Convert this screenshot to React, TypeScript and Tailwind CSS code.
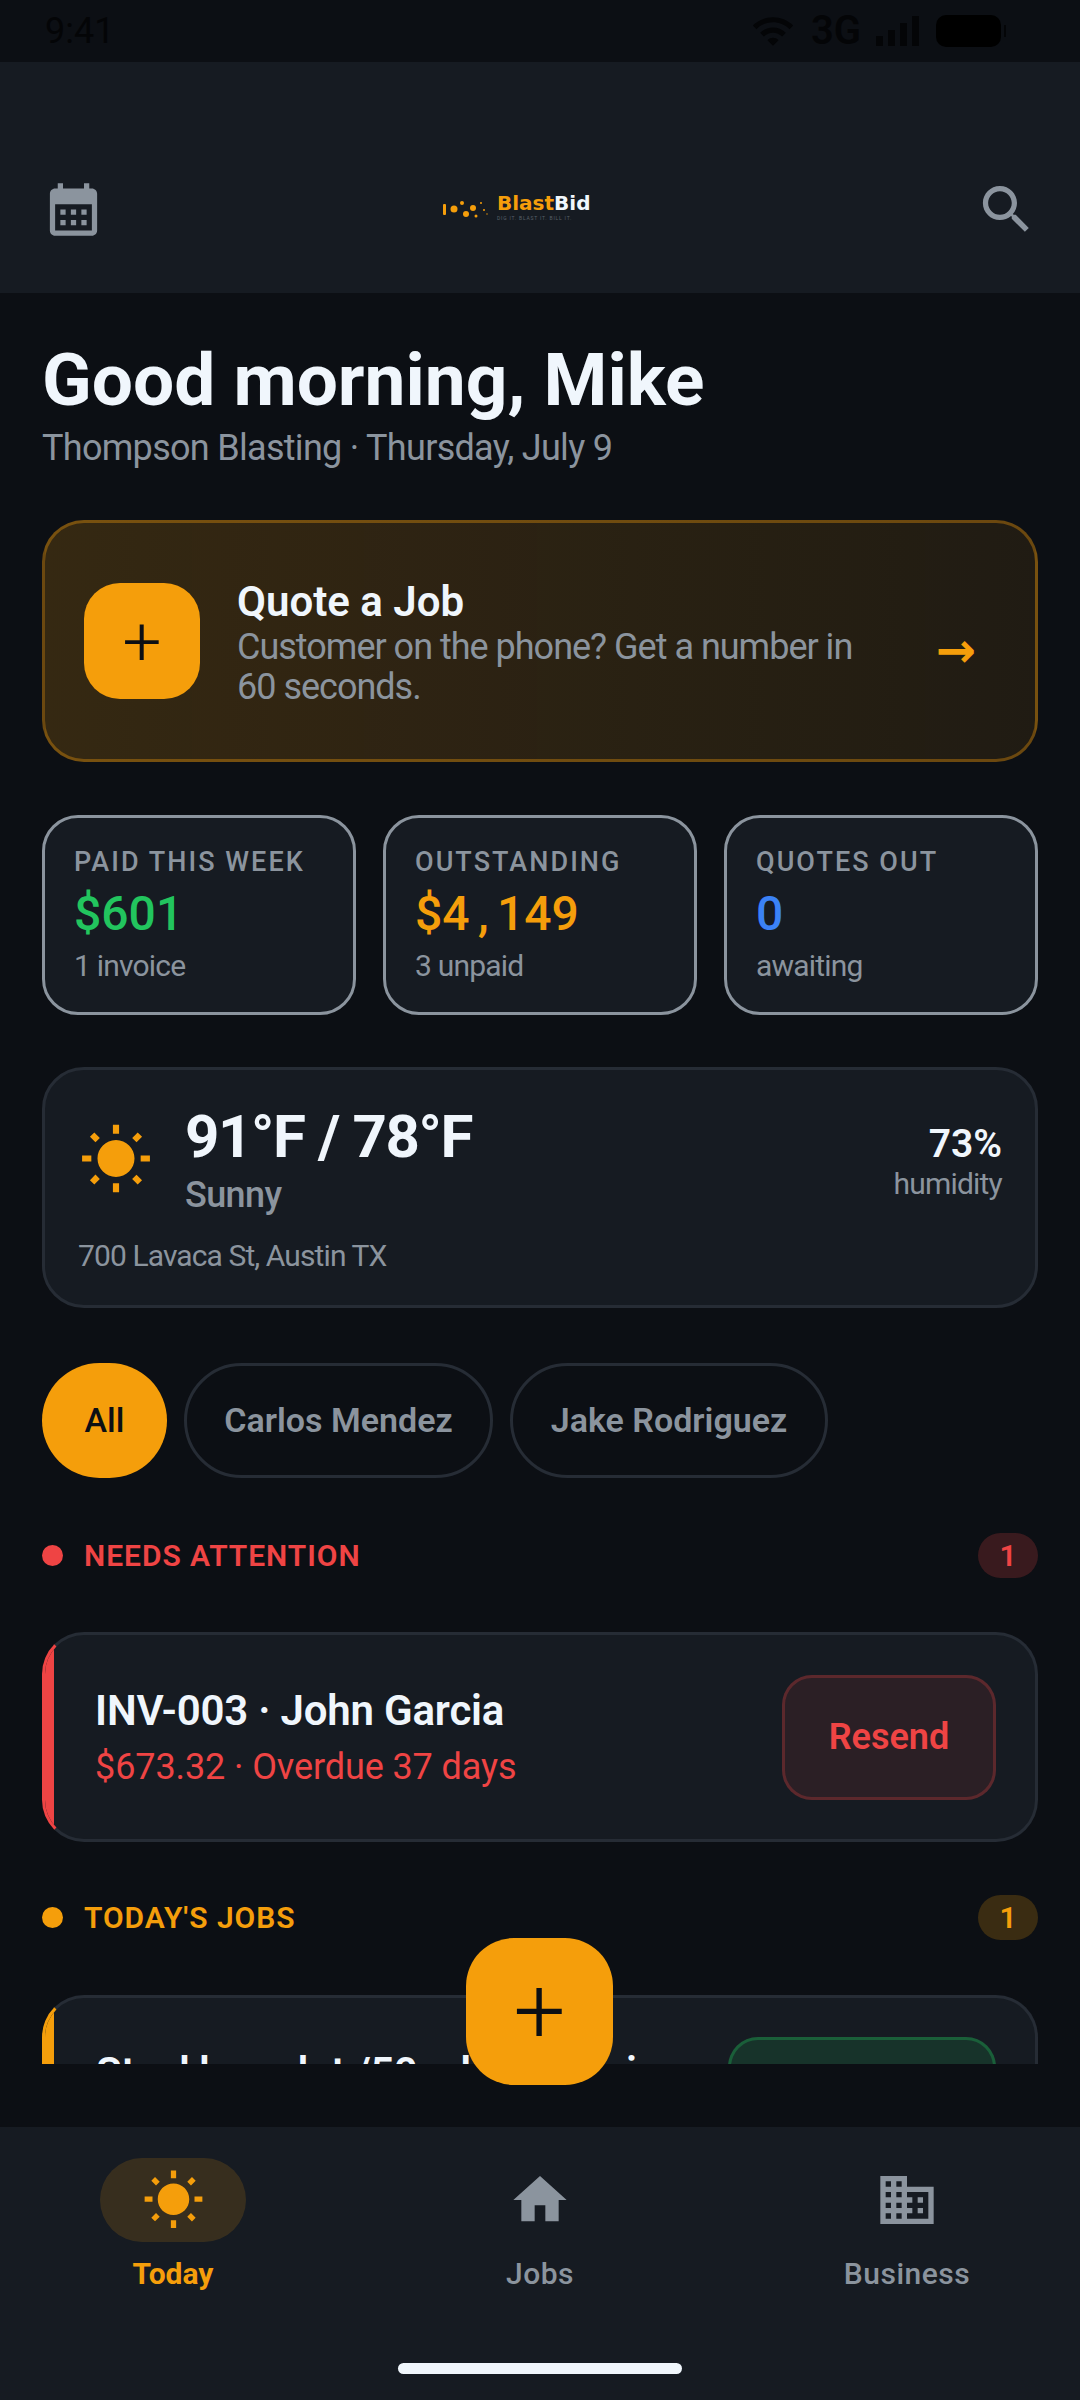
const sans = "font-['Roboto',sans-serif]";

const stats = [
  { label: "PAID THIS WEEK", value: "$601", sub: "1 invoice", color: "text-[#22c55e]" },
  { label: "OUTSTANDING", value: "$4,149", sub: "3 unpaid", color: "text-[#f59e0b]" },
  { label: "QUOTES OUT", value: "0", sub: "awaiting", color: "text-[#3b82f6]" },
];

function Sun({ size }: { size: string }) {
  return (
    <svg viewBox="0 0 24 24" className={`${size} fill-[#f59e0b]`}>
      <path d="M6.76 4.84l-1.8-1.79-1.41 1.41 1.79 1.79 1.42-1.41zM4 10.5H1v2h3v-2zm9-9.95h-2V3.5h2V.55zm7.45 3.91l-1.41-1.41-1.79 1.79 1.41 1.41 1.79-1.79zm-3.21 13.7l1.79 1.8 1.41-1.41-1.8-1.79-1.4 1.4zM20 10.5v2h3v-2h-3zm-8-5c-3.31 0-6 2.69-6 6s2.69 6 6 6 6-2.69 6-6-2.69-6-6-6zm-1 16.95h2V19.5h-2v2.95zm-7.45-3.91l1.41 1.41 1.79-1.8-1.41-1.41-1.79 1.8z" />
    </svg>
  );
}

function StatusBar() {
  return (
    <div className="h-[62px] bg-[#0c0f14] flex items-center pl-[45px] pr-[74px] text-[#040507]">
      <span className="text-[36px] leading-none">9:41</span>
      <div className="ml-auto flex items-center">
        <svg viewBox="0 0 24 24" className="w-[44px] h-[44px] fill-[#040507]">
          <path d="M1 9l2 2c5-5 13-5 18 0l2-2C17 3 7 3 1 9zm4 4l2 2c2.8-2.800 7.200-2.800 10 0l2-2c-3.900-3.900-10.100-3.900-14 0zm4 4l3 3 3-3c-1.700-1.700-4.300-1.700-6 0z" />
        </svg>
        <span className="ml-[16px] text-[40px] leading-none font-semibold">3G</span>
        <div className="ml-[15px] flex items-end gap-[5px] h-[30px]">
          <div className="w-[7px] h-[10px] bg-[#040507]" />
          <div className="w-[7px] h-[16px] bg-[#040507]" />
          <div className="w-[7px] h-[23px] bg-[#040507]" />
          <div className="w-[7px] h-[30px] bg-[#040507]" />
        </div>
        <div className="ml-[17px] w-[65px] h-[32px] rounded-[10px] bg-[#000000]" />
        <div className="ml-[3px] w-[2px] h-[12px] bg-[#040507]" />
      </div>
    </div>
  );
}

function Logo() {
  return (
    <div className="w-[194px] mt-[15px] flex items-start">
      <svg viewBox="0 0 47 20" className="w-[47px] h-[20px] fill-[#f59e0b] mt-[6px]">
        <rect x="0" y="5" width="3" height="11" rx="1" />
        <circle cx="11" cy="10" r="3.500" />
        <circle cx="19" cy="4" r="2" />
        <circle cx="23" cy="15" r="3" />
        <circle cx="30" cy="9" r="3" />
        <circle cx="33" cy="17" r="1.500" />
        <circle cx="38" cy="4" r="1" />
        <circle cx="41" cy="11" r="1" />
        <circle cx="44" cy="15" r="0.700" />
      </svg>
      <div className="ml-[7px] flex flex-col">
        <span className="font-['DejaVu_Sans',sans-serif] text-[20px] leading-[20px] font-bold text-[#f59e0b]">
          Blast<span className="text-[#f0f6fc]">Bid</span>
        </span>
        <span className="mt-[1px] text-[5px] leading-[8px] tracking-[0.8px] text-[#586069] whitespace-nowrap">
          DIG IT. BLAST IT. BILL IT.
        </span>
      </div>
    </div>
  );
}

function Header() {
  return (
    <div className="h-[231px] bg-[#161b22] pt-[116px] px-[42px] flex items-start">
      <svg viewBox="0 0 24 24" className="w-[63px] h-[63px] fill-[#8b949e]">
        <path d="M19 4h-1V2h-2v2H8V2H6v2H5C3.890 4 3.010 4.900 3.010 6L3 20c0 1.100.890 2 2 2h14c1.100 0 2-.900 2-2V6c0-1.100-.900-2-2-2zm0 16H5V10h14v10zM9 14H7v-2h2v2zm4 0h-2v-2h2v2zm4 0h-2v-2h2v2zM9 18H7v-2h2v2zm4 0h-2v-2h2v2zm4 0h-2v-2h2v2z" />
      </svg>
      <div className="flex-1 flex justify-center">
        <Logo />
      </div>
      <svg viewBox="0 0 24 24" className="w-[63px] h-[63px] fill-[#8b949e]">
        <path d="M15.500 14h-.790l-.280-.270C15.410 12.590 16 11.110 16 9.500 16 5.910 13.090 3 9.500 3S3 5.910 3 9.500 5.910 16 9.500 16c1.610 0 3.090-.590 4.230-1.570l.270.280v.790l5 4.990L20.490 19l-4.990-5zm-6 0C7.010 14 5 11.990 5 9.500S7.010 5 9.500 5 14 7.010 14 9.500 11.990 14 9.500 14z" />
      </svg>
    </div>
  );
}

function SectionHead({ title, dot, text, badge }: { title: string; dot: string; text: string; badge: string }) {
  return (
    <div className="flex items-center h-[45px]">
      <div className={`w-[21px] h-[21px] rounded-full ${dot}`} />
      <span className={`ml-[21px] text-[30px] leading-none font-semibold tracking-[0.950px] ${text}`}>{title}</span>
      <div className={`ml-auto w-[60px] h-[45px] rounded-full flex items-center justify-center text-[30px] font-semibold ${badge} ${text}`}>
        1
      </div>
    </div>
  );
}

export default function App() {
  return (
    <div className={`relative w-[1080px] h-[2400px] overflow-hidden flex flex-col bg-[#0c0f14] ${sans}`}>
      <StatusBar />
      <Header />

      <main className="h-[1771px] overflow-hidden px-[42px] pt-[44px]">
        <h1 className="text-[73px] leading-[86px] font-bold text-[#f0f6fc] whitespace-nowrap">Good morning, Mike</h1>
        <p className="mt-[2px] text-[36px] leading-[46px] tracking-[-0.7px] text-[#8b949e]">Thompson Blasting · Thursday, July 9</p>

        <div className="mt-[49px] h-[242px] rounded-[42px] border-[3px] border-[#f59e0b]/35 bg-linear-to-r from-[#f59e0b]/18 to-[#f59e0b]/9 flex items-center pl-[39px] pr-[59px]">
          <div className="w-[116px] h-[116px] shrink-0 rounded-[36px] bg-[#f59e0b] flex items-center justify-center text-[69px] leading-none font-light text-[#0c0f14]">
            +
          </div>
          <div className="ml-[37px] mt-[2px] flex-1">
            <div className="text-[42px] leading-[50px] font-semibold text-[#f0f6fc]">Quote a Job</div>
            <div className="text-[36px] leading-[40px] tracking-[-1px] text-[#8b949e] w-[640px]">Customer on the phone? Get a number in 60 seconds.</div>
          </div>
          <span className="mt-[18px] font-['DejaVu_Sans',sans-serif] text-[48px] leading-none font-bold text-[#f59e0b]">→</span>
        </div>

        <div className="mt-[53px] grid grid-cols-3 gap-[27px]">
          {stats.map((s) => (
            <div key={s.label} className="h-[200px] rounded-[36px] border-[3px] border-[#8b949e] bg-[#161b22] pl-[29px] pt-[27px]">
              <div className="text-[27px] leading-[34px] font-medium tracking-[2.050px] text-[#8b949e] whitespace-nowrap">{s.label}</div>
              <div className={`mt-[6px] flex text-[48px] leading-[58px] font-medium ${s.color}`}>
                {/* every character sits in one cell, the picture has a monospace figure here */}
                {s.value.split("").map((ch, i) => (
                  <span key={i} className="w-[27.3px] flex justify-center">{ch}</span>
                ))}
              </div>
              <div className="mt-[3px] text-[30px] leading-[40px] tracking-[-0.8px] text-[#8b949e]">{s.sub}</div>
            </div>
          ))}
        </div>

        <div className="mt-[52px] h-[241px] rounded-[42px] border-[3px] border-[#262c35] bg-[#161b22] px-[33px] pt-[32px]">
          <div className="flex items-start">
            <div className="mt-[21px] ml-[1px]">
              <Sun size="w-[74px] h-[74px]" />
            </div>
            <div className="ml-[32px]">
              <div className="text-[60px] leading-[70px] font-bold tracking-[-1.400px] text-[#f0f6fc]">91°F / 78°F</div>
              <div className="mt-[1px] text-[36px] leading-[44px] font-medium tracking-[-0.6px] text-[#8b949e]">Sunny</div>
            </div>
            <div className="ml-auto mt-[18px] text-right">
              <div className="text-[39px] leading-[48px] font-semibold text-[#f0f6fc]">73%</div>
              <div className="-mt-[2px] text-[30px] leading-[36px] tracking-[-0.8px] text-[#8b949e]">humidity</div>
            </div>
          </div>
          <div className="mt-[20px] text-[30px] leading-[38px] tracking-[-0.9px] text-[#8b949e]">700 Lavaca St, Austin TX</div>
        </div>

        <div className="mt-[55px] flex gap-[17px]">
          <div className="h-[115px] w-[125px] rounded-full bg-[#f59e0b] flex items-center justify-center text-[34px] font-medium text-[#0c0f14]">All</div>
          <div className="h-[115px] w-[309px] rounded-full border-[3px] border-[#262c35] flex items-center justify-center text-[34px] font-semibold text-[#8b949e]">Carlos Mendez</div>
          <div className="h-[115px] w-[318px] rounded-full border-[3px] border-[#262c35] flex items-center justify-center text-[34px] font-semibold text-[#8b949e]">Jake Rodriguez</div>
        </div>

        <div className="mt-[55px]">
          <SectionHead title="NEEDS ATTENTION" dot="bg-[#ef4444]" text="text-[#ef4444]" badge="bg-[#ef4444]/20" />
        </div>

        <div className="mt-[54px] h-[210px] rounded-[42px] border-[3px] border-[#262c35] border-l-[#ef4444] bg-[#161b22] overflow-hidden flex items-center pr-[39px]">
          <div className="w-[9px] self-stretch bg-[#ef4444]" />
          <div className="flex-1 pl-[42px]">
            <div className="-ml-[1px] text-[42px] leading-[54px] font-semibold tracking-[-0.2px] text-[#f0f6fc]">INV-003 · John Garcia</div>
            <div className="-ml-[1px] mt-[6px] text-[36px] leading-[46px] tracking-[-0.1px] text-[#ef4444]">$673.32 · Overdue 37 days</div>
          </div>
          <div className="w-[214px] h-[125px] rounded-[30px] border-[3px] border-[#ef4444]/25 bg-[#ef4444]/10 flex items-center justify-center text-[36px] font-semibold text-[#ef4444]">
            Resend
          </div>
        </div>

        <div className="mt-[53px]">
          <SectionHead title="TODAY'S JOBS" dot="bg-[#f59e0b]" text="text-[#f59e0b]" badge="bg-[#f59e0b]/20" />
        </div>

        <div className="mt-[55px] h-[210px] rounded-[42px] border-[3px] border-[#262c35] border-l-[#f59e0b] bg-[#161b22] overflow-hidden flex items-start pr-[39px] pt-[39px]">
          <div className="w-[9px] self-stretch -mt-[39px] bg-[#f59e0b]" />
          <div className="flex-1 pl-[42px] pt-[9px] text-[42px] leading-[54px] font-semibold tracking-[-0.5px] text-[#f0f6fc] whitespace-nowrap overflow-hidden">
            Steel base lot /50 yd blast, mine
          </div>
          <div className="ml-[20px] w-[268px] h-[125px] shrink-0 rounded-[30px] border-[3px] border-[#22c55e]/30 bg-[#22c55e]/15" />
        </div>
      </main>

      <div className="h-[63px]" />

      <nav className="flex-1 bg-[#161b22] px-[100px] pt-[31px] flex flex-col">
        <div className="flex justify-between">
          <div className="w-[146px] flex flex-col items-center">
            <div className="w-[146px] h-[84px] rounded-full bg-[#f59e0b]/15 flex items-center justify-center">
              <Sun size="w-[63px] h-[63px]" />
            </div>
            <span className="mt-[14px] text-[30px] leading-[36px] font-bold text-[#f59e0b]">Today</span>
          </div>
          <div className="w-[146px] flex flex-col items-center">
            <div className="h-[84px] flex items-center justify-center">
              <svg viewBox="0 0 24 24" className="w-[64px] h-[64px] fill-[#8b949e]">
                <path d="M10 20v-6h4v6h5v-8h3L12 3 2 12h3v8z" />
              </svg>
            </div>
            <span className="mt-[14px] text-[30px] leading-[36px] font-medium tracking-[0.5px] text-[#8b949e]">Jobs</span>
          </div>
          <div className="w-[146px] flex flex-col items-center">
            <div className="h-[84px] flex items-center justify-center">
              <svg viewBox="0 0 24 24" className="w-[64px] h-[64px] fill-[#8b949e]">
                <path d="M12 7V3H2v18h20V7H12zM6 19H4v-2h2v2zm0-4H4v-2h2v2zm0-4H4V9h2v2zm0-4H4V5h2v2zm4 12H8v-2h2v2zm0-4H8v-2h2v2zm0-4H8V9h2v2zm0-4H8V5h2v2zm10 12h-8v-2h2v-2h-2v-2h2v-2h-2V9h8v10zm-2-8h-2v2h2v-2zm0 4h-2v2h2v-2z" />
              </svg>
            </div>
            <span className="mt-[14px] text-[30px] leading-[36px] font-medium tracking-[0.5px] text-[#8b949e]">Business</span>
          </div>
        </div>
        <div className="mt-auto mb-[26px] mx-auto w-[284px] h-[11px] rounded-full bg-[#f0f6fc]" />
      </nav>

      <div className="absolute left-[466px] top-[1938px] w-[147px] h-[147px] rounded-[48px] bg-[#f59e0b] flex items-center justify-center text-[92px] leading-none font-light text-[#0c0f14]">
        +
      </div>
    </div>
  );
}
